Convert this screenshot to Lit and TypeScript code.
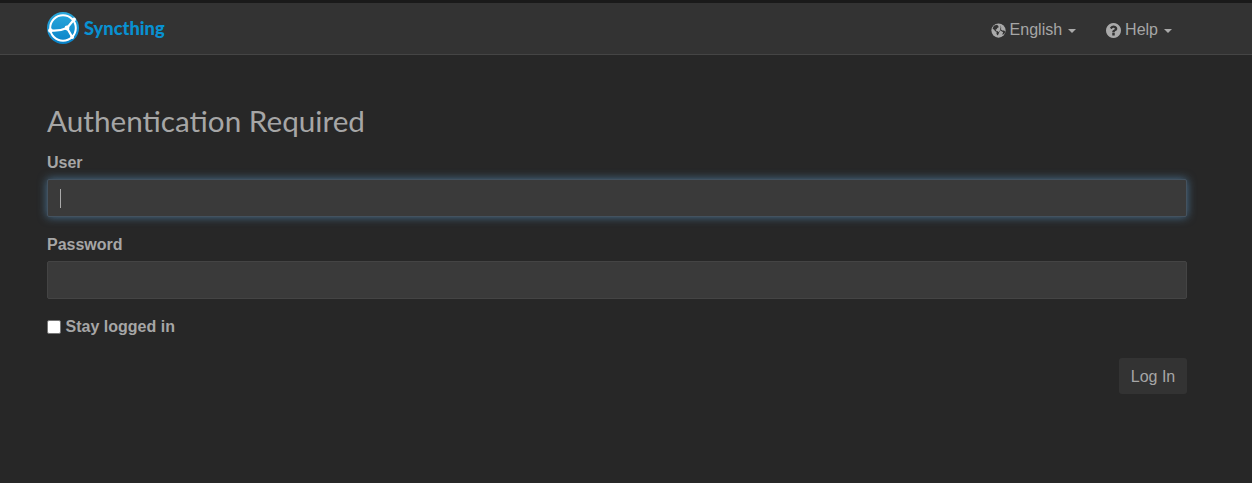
import { LitElement, html, css } from "lit";
import { customElement } from "lit/decorators.js";

const globe = html`<svg class="ic" viewBox="0 0 16 16" aria-hidden="true">
  <circle cx="8" cy="8" r="7.600" fill="#aaa"/>
  <path d="M6.200 1.800 3 3 1.700 6.200l1.700.9 1 1.700 1.700.6-.4 1.600 1 2.300 1.100-1 .9-2.200-1.500-1.300-1.700-.6-.6-1.200 1.200-.4.600-1.400 1.500-.6-.5-1.800z" fill="#333"/>
  <path d="M10.500 2.200 9.700 4.200l1.400.8-.7 1.600 1.700 1.400 1.900.1 1 .9-.2 1.600-1.300 1.500-1.600.4 1.100-2.700-1.800-.9-1-1-1.500.5.600 1.800" fill="#333"/>
</svg>`;

const help = html`<svg class="ic" viewBox="128 128 1536 1536" aria-hidden="true">
  <path fill="#aaa" d="M1024 1376v-192q0-14-9-23t-23-9h-192q-14 0-23 9t-9 23v192q0 14 9 23t23 9h192q14 0 23-9t9-23zm256-672q0-88-55.500-163t-138.500-116-170-41q-243 0-371 213-15 24 8 42l132 100q7 6 19 6 16 0 25-12 53-68 86-92 34-24 86-24 48 0 85.500 26t37.500 59q0 38-20 61t-68 45q-63 28-115.500 86.500t-52.500 125.500v36q0 14 9 23t23 9h192q14 0 23-9t9-23q0-19 21.500-49.500t54.500-49.500q32-18 49-28.500t46-35 44.500-48 28-60.500 12.500-81zm384 192q0 209-103 385.500t-279.500 279.500-385.500 103-385.500-103-279.500-279.500-103-385.500 103-385.500 279.500-279.500 385.500-103 385.500 103 279.500 279.500 103 385.500z"/>
</svg>`;

const logo = html`<svg class="logo" viewBox="0 0 32 32" aria-hidden="true">
  <defs><linearGradient id="g" x1="0" y1="0" x2="0" y2="1">
    <stop offset="0" stop-color="#2aa9dc"/><stop offset="1" stop-color="#0882c8"/>
  </linearGradient></defs>
  <circle cx="16" cy="16" r="16" fill="url(#g)"/>
  <circle cx="16" cy="16" r="12.800" fill="none" stroke="#fff" stroke-width="2"/>
  <path d="M3.400 18.500Q12 19.500 20 16L27 7.500M20 16 25.200 25" fill="none" stroke="#fff" stroke-width="2.200"/>
  <circle cx="3.400" cy="18.500" r="2.300" fill="#fff"/>
  <circle cx="20" cy="16" r="2.400" fill="#fff"/>
  <circle cx="27" cy="7.500" r="1.900" fill="#fff"/>
  <circle cx="25.200" cy="25" r="1.900" fill="#fff"/>
</svg>`;

@customElement("app-root")
export class AppRoot extends LitElement {
  static styles = css`
    :host {
      display: block;
      min-height: 483px;
      background: #272727;
      color: #a6a6a6;
      font-family: "Liberation Sans", Arial, sans-serif;
      font-size: 16px;
      line-height: 22.857px;
    }
    .nav {
      height: 51px;
      border-top: 3px solid #1a1a1a;
      border-bottom: 1px solid #454545;
      background: #333;
      display: flex;
      align-items: center;
      padding: 0 80px 0 47px;
    }
    .brand {
      display: flex;
      align-items: center;
      gap: 5px;
      color: #0891d1;
      font-family: Lato, sans-serif;
      font-weight: 900;
      font-size: 18.300px;
      margin-top: -1px;
    }
    .logo { width: 32px; height: 32px; display: block; }
    .menu { margin-left: auto; margin-top: 4px; display: flex; gap: 30px; align-items: center; }
    .item { display: flex; align-items: center; gap: 4px; }
    .ic { width: 15px; height: 15px; display: block; }
    .caret {
      width: 0; height: 0; margin-left: 2px; margin-top: 1px;
      border-top: 4px solid #aaa;
      border-left: 4px solid transparent;
      border-right: 4px solid transparent;
    }
    main { padding: 0 65px 0 47px; }
    h1 {
      margin: 48px 0 0;
      font-family: Lato, sans-serif;
      font-weight: 400;
      font-size: 29.700px;
      line-height: 36px;
      color: #a6a6a6;
    }
    label { display: block; font-weight: 700; }
    .lab1 { margin-top: 13px; }
    .lab2 { margin-top: 17px; }
    .field {
      margin-top: 4px;
      box-sizing: border-box;
      height: 38px;
      background: #3a3a3a;
      border: 1px solid #444;
      border-radius: 2px;
    }
    .focus {
      display: flex;
      align-items: center;
      padding-left: 12px;
      border-color: #44525f;
      box-shadow: 0 0 10px rgba(102, 175, 233, 0.55);
    }
    .cursor { width: 1px; height: 19px; margin-top: 1px; background: #aaa; }
    .check { display: flex; align-items: center; gap: 4.600px; margin-top: 17px; }
    .box {
      box-sizing: border-box;
      width: 14px; height: 14px;
      background: #fff;
      border: 1px solid #767676;
      border-radius: 2px;
    }
    .actions { display: flex; justify-content: flex-end; margin-top: 19px; }
    .btn {
      box-sizing: border-box;
      width: 68px; height: 36px;
      padding-top: 4px;
      background: #333;
      border-radius: 3px;
      display: flex;
      align-items: center;
      justify-content: center;
    }
  `;

  render() {
    return html`
      <div class="nav">
        <div class="brand">${logo}<span>Syncthing</span></div>
        <div class="menu">
          <div class="item">${globe}<span>English</span><i class="caret"></i></div>
          <div class="item">${help}<span>Help</span><i class="caret"></i></div>
        </div>
      </div>
      <main>
        <h1>Authentication Required</h1>
        <label class="lab1">User</label>
        <div class="field focus"><div class="cursor"></div></div>
        <label class="lab2">Password</label>
        <div class="field"></div>
        <div class="check"><div class="box"></div><label>Stay logged in</label></div>
        <div class="actions"><div class="btn">Log In</div></div>
      </main>
    `;
  }
}
